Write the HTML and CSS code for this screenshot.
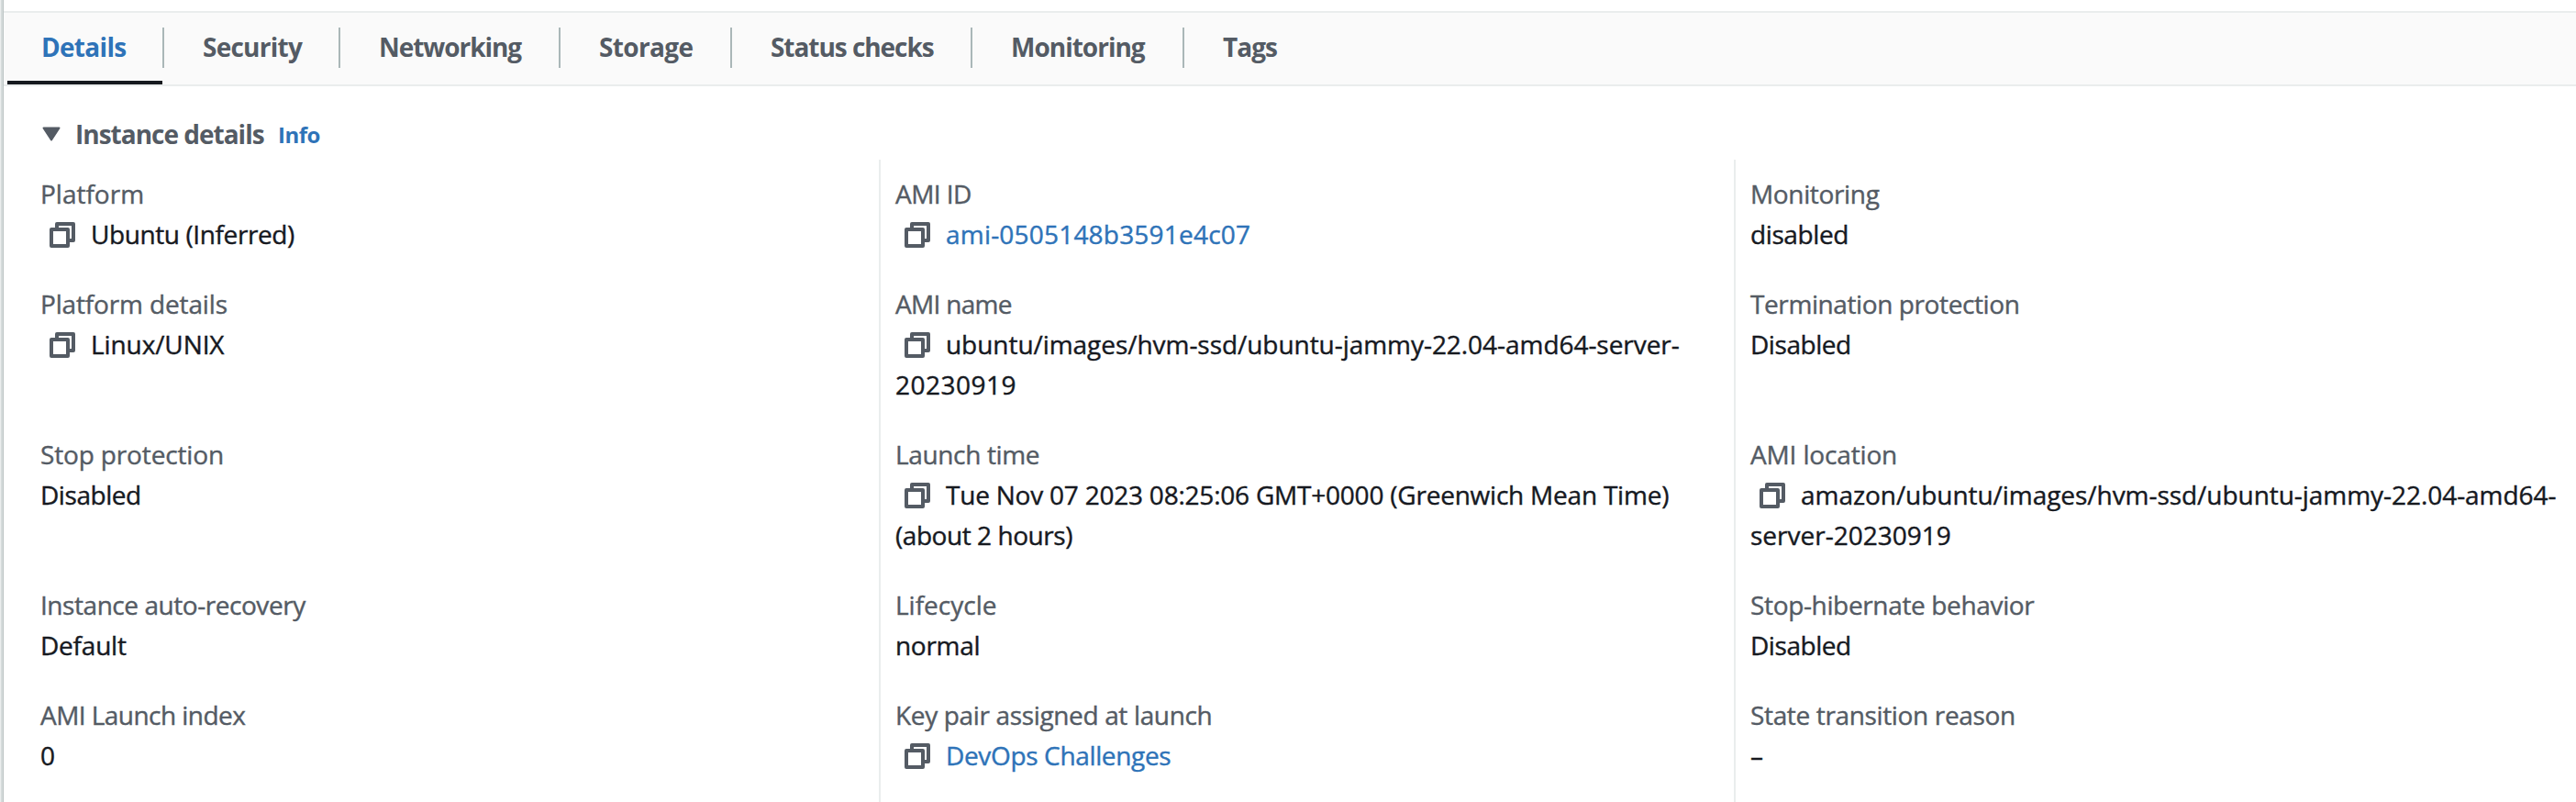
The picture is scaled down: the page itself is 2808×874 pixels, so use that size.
FILE: index.html
```html
<!DOCTYPE html>
<html lang="en">
<head>
<meta charset="utf-8">
<title>Instance details</title>
<link rel="stylesheet" href="styles.css">
</head>
<body>
<svg class="sprite" aria-hidden="true">
  <symbol id="copy" viewBox="0 0 28 28">
    <rect x="2" y="8" width="18" height="18"/>
    <path d="M8 8V2h18v18h-6"/>
  </symbol>
</svg>
<main class="panel">
  <nav class="tabs">
    <a class="tab active"><span class="k70">Details</span></a>
    <a class="tab"><span class="k75">Security</span></a>
    <a class="tab"><span class="k105">Networking</span></a>
    <a class="tab"><span class="k65">Storage</span></a>
    <a class="tab"><span class="k105">Status checks</span></a>
    <a class="tab"><span class="k100">Monitoring</span></a>
    <a class="tab"><span class="k100">Tags</span></a>
  </nav>
  <header class="section-head">
    <svg class="caret" viewBox="0 0 20 16"><path d="M1.5 1.5h17L10 14.5z"/></svg>
    <h2 class="k100">Instance details</h2>
    <a class="info">Info</a>
  </header>
  <section class="grid">
    <div class="column">
      <dl class="field"><dt>Platform</dt><dd><svg class="copy"><use href="#copy"/></svg><span class="k40">Ubuntu (Inferred)</span></dd></dl>
      <dl class="field tall"><dt class="k15">Platform details</dt><dd><svg class="copy"><use href="#copy"/></svg><span class="k10">Linux/UNIX</span></dd></dl>
      <dl class="field tall"><dt class="k15">Stop protection</dt><dd class="k45">Disabled</dd></dl>
      <dl class="field"><dt class="k45">Instance auto-recovery</dt><dd class="k20">Default</dd></dl>
      <dl class="field"><dt class="k55">AMI Launch index</dt><dd>0</dd></dl>
    </div>
    <div class="column">
      <dl class="field"><dt class="k55">AMI ID</dt><dd><svg class="copy"><use href="#copy"/></svg><a class="link w20">ami-0505148b3591e4c07</a></dd></dl>
      <dl class="field tall"><dt class="k70">AMI name</dt><dd><svg class="copy"><use href="#copy"/></svg><span class="k05">ubuntu/images/hvm-ssd/ubuntu-jammy-22.04-amd64-server-</span><br><span class="w50">20230919</span></dd></dl>
      <dl class="field tall"><dt class="k35">Launch time</dt><dd><svg class="copy"><use href="#copy"/></svg><span class="k20">Tue Nov 07 2023 08:25:06 GMT+0000 (Greenwich Mean Time)</span><br><span class="k45">(about 2 hours)</span></dd></dl>
      <dl class="field"><dt>Lifecycle</dt><dd class="k30">normal</dd></dl>
      <dl class="field"><dt class="k35">Key pair assigned at launch</dt><dd><svg class="copy"><use href="#copy"/></svg><a class="link k35">DevOps Challenges</a></dd></dl>
    </div>
    <div class="column">
      <dl class="field"><dt class="k35">Monitoring</dt><dd class="k40">disabled</dd></dl>
      <dl class="field tall"><dt class="k40">Termination protection</dt><dd class="k45">Disabled</dd></dl>
      <dl class="field tall"><dt class="k15">AMI location</dt><dd><svg class="copy"><use href="#copy"/></svg><span class="k05">amazon/ubuntu/images/hvm-ssd/ubuntu-jammy-22.04-amd64-</span><br>server-20230919</dd></dl>
      <dl class="field"><dt class="k35">Stop-hibernate behavior</dt><dd class="k45">Disabled</dd></dl>
      <dl class="field"><dt class="k35">State transition reason</dt><dd>–</dd></dl>
    </div>
  </section>
</main>
</body>
</html>
```

FILE: styles.css
```css
* { box-sizing: border-box; }
body {
  margin: 0;
  background: #fff;
  color: #16191f;
  font: 28px/44px "Open Sans", "Noto Sans", sans-serif;
  white-space: nowrap;
  overflow: hidden;
}
.sprite { display: none; }
.panel {
  height: 874px;
  padding-top: 12px;
  border-left: 4px solid #c6cccc;
  border-image: linear-gradient(to right, #eaeded 0 1px, #d5dbdb 1px 3px, #bcc4c4 3px) 0 0 0 4;
  overflow: hidden;
}

/* Tab bar */
.tabs {
  display: flex;
  height: 82px;
  padding-left: 4px;
  background: #fafafa;
  border-top: 2px solid #eaeded;
  border-bottom: 2px solid #eaeded;
}
.tab {
  height: 78px;
  padding: 16px 0 18px;
  color: #545b64;
  font-weight: 700;
}
.tab span {
  display: block;
  height: 44px;
  padding-left: 42px;
  border-right: 2px solid #aab7b8;
  line-height: 43px;
}
.tab.active {
  color: #2e73b8;
  background: linear-gradient(#16191f, #16191f) left bottom / 169px 4px no-repeat;
}
.tab.active span { padding-left: 37px; width: 171px; }
.tab:nth-child(2) span { width: 192px; }
.tab:nth-child(3) span { width: 240px; }
.tab:nth-child(4) span { width: 187px; }
.tab:nth-child(5) span { width: 262px; }
.tab:nth-child(6) span { width: 231px; }
.tab:last-child span { border-right: 0; }

/* Section heading */
.section-head { display: flex; align-items: center; height: 80px; padding: 24px 0 0 42px; }
.caret { width: 20px; height: 16px; fill: #545b64; stroke: #545b64; stroke-width: 2; stroke-linejoin: round; }
.section-head h2 { margin: 0 0 0 16px; width: 221px; font-size: 28px; line-height: 44px; color: #545b64; }
.info { padding-top: 2px; color: #2e73b8; font-size: 24px; font-weight: 700; letter-spacing: -.5px; }

/* Three column attribute list */
.grid { display: grid; grid-template-columns: 930px 932px 916px; height: 700px; padding-left: 24px; }
.column { padding: 15px 0 0 16px; -webkit-text-stroke: .4px currentColor; }
.column + .column { border-left: 2px solid #eaeded; }
.field { height: 120px; margin: 0; }
.field.tall { height: 164px; }
.field dt { color: #545b64; }
.field dd { margin: 0; }
.link { color: #2e73b8; }
.copy {
  width: 28px;
  height: 28px;
  margin: 0 17px 0 10px;
  vertical-align: -4px;
  fill: none;
  stroke: #545b64;
  stroke-width: 4;
  stroke-linejoin: round;
}

/* Tracking steps */
.k05 { letter-spacing: -.05px; }
.k10 { letter-spacing: -.1px; }
.k15 { letter-spacing: -.15px; }
.k20 { letter-spacing: -.22px; }
.k30 { letter-spacing: -.3px; }
.k35 { letter-spacing: -.35px; }
.k40 { letter-spacing: -.4px; }
.k45 { letter-spacing: -.45px; }
.k55 { letter-spacing: -.55px; }
.k65 { letter-spacing: -.65px; }
.k70 { letter-spacing: -.7px; }
.k75 { letter-spacing: -.75px; }
.k100 { letter-spacing: -1px; }
.k105 { letter-spacing: -1.05px; }
.w20 { letter-spacing: .2px; }
.w50 { letter-spacing: .5px; }
```
